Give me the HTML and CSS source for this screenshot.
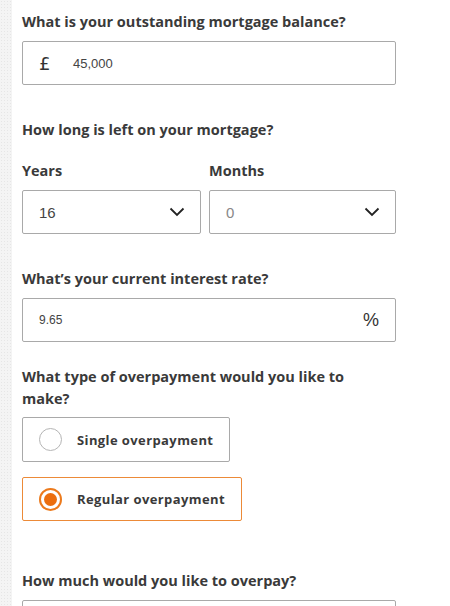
FILE: index.html
```html
<!DOCTYPE html>
<html lang="en">
<head>
    <meta charset="UTF-8">
    <meta name="viewport" content="width=device-width, initial-scale=1.0">
    <title>Mortgage overpayment calculator</title>
    <link rel="stylesheet" href="styles.css">
</head>
<body>
    <div class="page">
        <!-- Balance -->
        <div class="field">
            <label class="question">What is your outstanding mortgage balance?</label>
            <div class="box">
                <span class="prefix">£</span>
                <span class="value">45,000</span>
            </div>
        </div>

        <!-- Term -->
        <div class="field">
            <p class="question">How long is left on your mortgage?</p>
            <div class="term">
                <div class="term-col">
                    <label class="sub-label">Years</label>
                    <div class="box select">
                        <span class="value big">16</span>
                        <svg class="chevron" viewBox="0 0 16 10" width="16" height="10"><path d="M1.5 1.5 L8 8 L14.5 1.5" fill="none" stroke="#222" stroke-width="1.8"/></svg>
                    </div>
                </div>
                <div class="term-col">
                    <label class="sub-label">Months</label>
                    <div class="box select">
                        <span class="value big muted">0</span>
                        <svg class="chevron" viewBox="0 0 16 10" width="16" height="10"><path d="M1.5 1.5 L8 8 L14.5 1.5" fill="none" stroke="#222" stroke-width="1.8"/></svg>
                    </div>
                </div>
            </div>
        </div>

        <!-- Rate -->
        <div class="field rate">
            <label class="question">What’s your current interest rate?</label>
            <div class="box">
                <span class="value small">9.65</span>
                <span class="suffix">%</span>
            </div>
        </div>

        <!-- Overpayment type -->
        <div class="field">
            <p class="question">What type of overpayment would you like to make?</p>
            <div class="options">
                <div class="option">
                    <span class="radio"></span>
                    <span class="option-text">Single overpayment</span>
                </div>
                <div class="option checked">
                    <span class="radio"></span>
                    <span class="option-text">Regular overpayment</span>
                </div>
            </div>
        </div>

        <!-- Amount -->
        <div class="field last">
            <label class="question">How much would you like to overpay?</label>
            <div class="box"></div>
        </div>
    </div>
</body>
</html>
```

FILE: styles.css
```css
* {
    margin: 0;
    padding: 0;
    box-sizing: border-box;
}

body {
    background-color: #f4f4f4;
    background-image: radial-gradient(#e6e6e6 1px, transparent 1px);
    background-size: 3px 3px;
    font-family: "Open Sans", Arial, sans-serif;
    color: #333;
    overflow: hidden;
}

.page {
    margin-left: 12px;
    background-color: #fff;
    min-height: 606px;
    padding: 11px 0 0 10px;
}

.field {
    width: 374px;
    margin-bottom: 34px;
}

.field.rate {
    margin-bottom: 24px;
}

.question {
    display: block;
    max-width: 362px;
    font-size: 14.5px;
    font-weight: 700;
    line-height: 22px;
    color: #3a3a3a;
    margin-bottom: 8px;
}

.box {
    display: flex;
    align-items: center;
    height: 44px;
    border: 1px solid #a9a9a9;
    border-radius: 2px;
    background-color: #fff;
    padding: 0 16px;
    font-family: "Liberation Sans", Arial, sans-serif;
    color: #444;
}

.prefix {
    font-family: "DejaVu Sans", sans-serif;
    font-size: 18px;
    width: 34px;
    color: #333;
}

.value {
    font-size: 13px;
}

.value.big {
    font-size: 15px;
}

.value.small {
    font-size: 12px;
}

.muted {
    color: #888;
}

.suffix {
    margin-left: auto;
    font-size: 18px;
    color: #333;
}

/* Years / months */
.term {
    display: flex;
    gap: 8px;
    margin-top: 20px;
}

.term-col {
    flex: 1;
}

.term-col:first-child {
    flex: 0 0 179px;
}

.sub-label {
    display: block;
    font-size: 14.5px;
    font-weight: 700;
    line-height: 20px;
    color: #3a3a3a;
    margin-bottom: 9px;
}

.select {
    justify-content: space-between;
}

.chevron {
    margin-right: -1px;
}

/* Radio options */
.options {
    display: flex;
    flex-direction: column;
    align-items: flex-start;
    gap: 15px;
    margin-top: -1px;
}

.option {
    display: flex;
    align-items: center;
    height: 45px;
    border: 1px solid #a9a9a9;
    border-radius: 2px;
    padding: 0 16px 0 16px;
}

.option.checked {
    height: 44px;
    border-color: #ec8a38;
}

.radio {
    width: 23px;
    height: 23px;
    border: 1px solid #b5b5b5;
    border-radius: 50%;
    margin-right: 15px;
    position: relative;
}

.option.checked .radio {
    border: 2px solid #ec7a1c;
}

.option.checked .radio::after {
    content: "";
    position: absolute;
    top: 3px;
    left: 3px;
    width: 13px;
    height: 13px;
    border-radius: 50%;
    background-color: #ec6e0e;
}

.option-text {
    font-size: 13px;
    font-weight: 700;
    letter-spacing: 0.4px;
    color: #3a3a3a;
}

.field.last {
    margin-top: 49px;
}
```
